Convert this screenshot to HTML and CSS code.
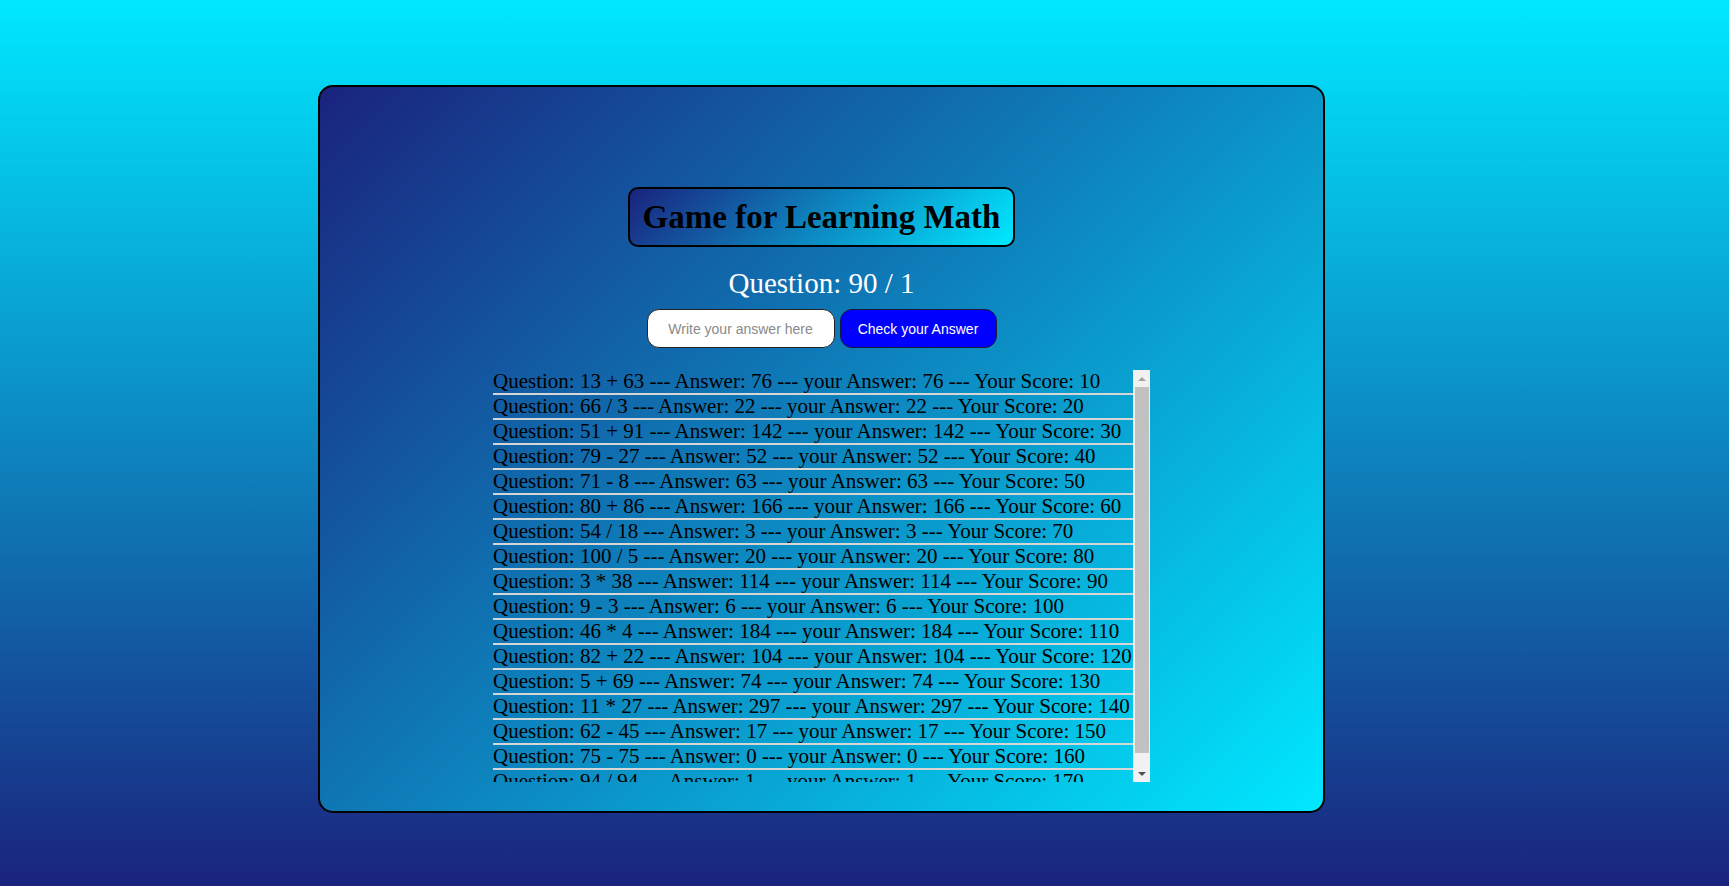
FILE: index.html
```html
<!DOCTYPE html>
<html lang="en">
<head>
<meta charset="utf-8">
<title>Game for Learning Math</title>
<link rel="stylesheet" href="styles.css">
</head>
<body>
<main class="card">
  <h1 class="title">Game for Learning Math</h1>
  <h2 class="counter">Question: 90 / 1</h2>
  <div class="controls">
    <input class="answer" type="text" placeholder="Write your answer here">
    <button class="check">Check your Answer</button>
  </div>
  <div class="history-wrap">
    <ul class="history">
      <li>Question: 13 + 63 --- Answer: 76 --- your Answer: 76 --- Your Score: 10</li>
      <li>Question: 66 / 3 --- Answer: 22 --- your Answer: 22 --- Your Score: 20</li>
      <li>Question: 51 + 91 --- Answer: 142 --- your Answer: 142 --- Your Score: 30</li>
      <li>Question: 79 - 27 --- Answer: 52 --- your Answer: 52 --- Your Score: 40</li>
      <li>Question: 71 - 8 --- Answer: 63 --- your Answer: 63 --- Your Score: 50</li>
      <li>Question: 80 + 86 --- Answer: 166 --- your Answer: 166 --- Your Score: 60</li>
      <li>Question: 54 / 18 --- Answer: 3 --- your Answer: 3 --- Your Score: 70</li>
      <li>Question: 100 / 5 --- Answer: 20 --- your Answer: 20 --- Your Score: 80</li>
      <li>Question: 3 * 38 --- Answer: 114 --- your Answer: 114 --- Your Score: 90</li>
      <li>Question: 9 - 3 --- Answer: 6 --- your Answer: 6 --- Your Score: 100</li>
      <li>Question: 46 * 4 --- Answer: 184 --- your Answer: 184 --- Your Score: 110</li>
      <li>Question: 82 + 22 --- Answer: 104 --- your Answer: 104 --- Your Score: 120</li>
      <li>Question: 5 + 69 --- Answer: 74 --- your Answer: 74 --- Your Score: 130</li>
      <li>Question: 11 * 27 --- Answer: 297 --- your Answer: 297 --- Your Score: 140</li>
      <li>Question: 62 - 45 --- Answer: 17 --- your Answer: 17 --- Your Score: 150</li>
      <li>Question: 75 - 75 --- Answer: 0 --- your Answer: 0 --- Your Score: 160</li>
      <li>Question: 94 / 94 --- Answer: 1 --- your Answer: 1 --- Your Score: 170</li>
    </ul>
    <div class="scrollbar" aria-hidden="true">
      <span class="arrow arrow-up"></span>
      <span class="thumb"></span>
      <span class="arrow arrow-down"></span>
    </div>
  </div>
</main>
</body>
</html>
```
FILE: styles.css
```css
html, body {
  margin: 0;
  padding: 0;
}
body {
  min-height: 886px;
  height: 100vh;
  background: linear-gradient(to bottom, #00e8ff 0%, #1a237e 100%);
  font-family: "Liberation Serif", "Times New Roman", serif;
  overflow: hidden;
}
.card {
  box-sizing: border-box;
  width: 1007px;
  height: 728px;
  margin: 85px 0 0 318px;
  padding-top: 100px;
  border: 2px solid #000;
  border-radius: 15px;
  background: linear-gradient(135deg, #1a237e 0%, #00e8ff 100%);
  display: flex;
  flex-direction: column;
  align-items: center;
}
.title {
  margin: 0;
  padding: 9px 13px;
  border: 2px solid #000;
  border-radius: 10px;
  background: linear-gradient(135deg, #1a237e 0%, #00e8ff 100%);
  font-size: 33px;
  font-weight: bold;
  color: #000;
  line-height: 38px;
}
.counter {
  margin: 20px 0 0;
  font-size: 29px;
  font-weight: normal;
  line-height: 33px;
  color: #fff;
}
.controls {
  display: flex;
  gap: 5px;
  margin-top: 9px;
}
.answer {
  box-sizing: border-box;
  width: 188px;
  height: 39px;
  border: 1px solid #222;
  border-radius: 12px;
  background: #fff;
  font-family: "Liberation Sans", Arial, sans-serif;
  font-size: 14px;
  text-align: center;
  outline: none;
}
.answer::placeholder {
  color: #8a8a8a;
}
.check {
  box-sizing: border-box;
  width: 157px;
  height: 39px;
  border: 1px solid #1a1a3a;
  border-radius: 12px;
  background: #0000ff;
  color: #fff;
  font-family: "Liberation Sans", Arial, sans-serif;
  font-size: 14px;
  font-weight: normal;
  padding: 0;
}
.history-wrap {
  display: flex;
  width: 657px;
  height: 412px;
  margin-top: 22px;
}
.history {
  list-style: none;
  margin: 0;
  padding: 0;
  flex: 0 0 640px;
  height: 412px;
  overflow: hidden;
}
.history li {
  font-size: 21px;
  line-height: 23px;
  color: #000;
  white-space: nowrap;
  border-bottom: 2px solid #d6d6d6;
}
.scrollbar {
  flex: 0 0 17px;
  display: flex;
  flex-direction: column;
  background: #f1f1f1;
}
.arrow {
  display: flex;
  align-items: center;
  justify-content: center;
  height: 17px;
}
.arrow::before {
  content: "";
  width: 0;
  height: 0;
  border-left: 4px solid transparent;
  border-right: 4px solid transparent;
}
.arrow-up::before {
  border-bottom: 4px solid #a3a3a3;
}
.arrow-down {
  margin-top: auto;
}
.arrow-down::before {
  border-top: 4px solid #505050;
}
.thumb {
  display: block;
  height: 366px;
  margin: 0 1px 0 2px;
  background: #c1c1c1;
}
```
